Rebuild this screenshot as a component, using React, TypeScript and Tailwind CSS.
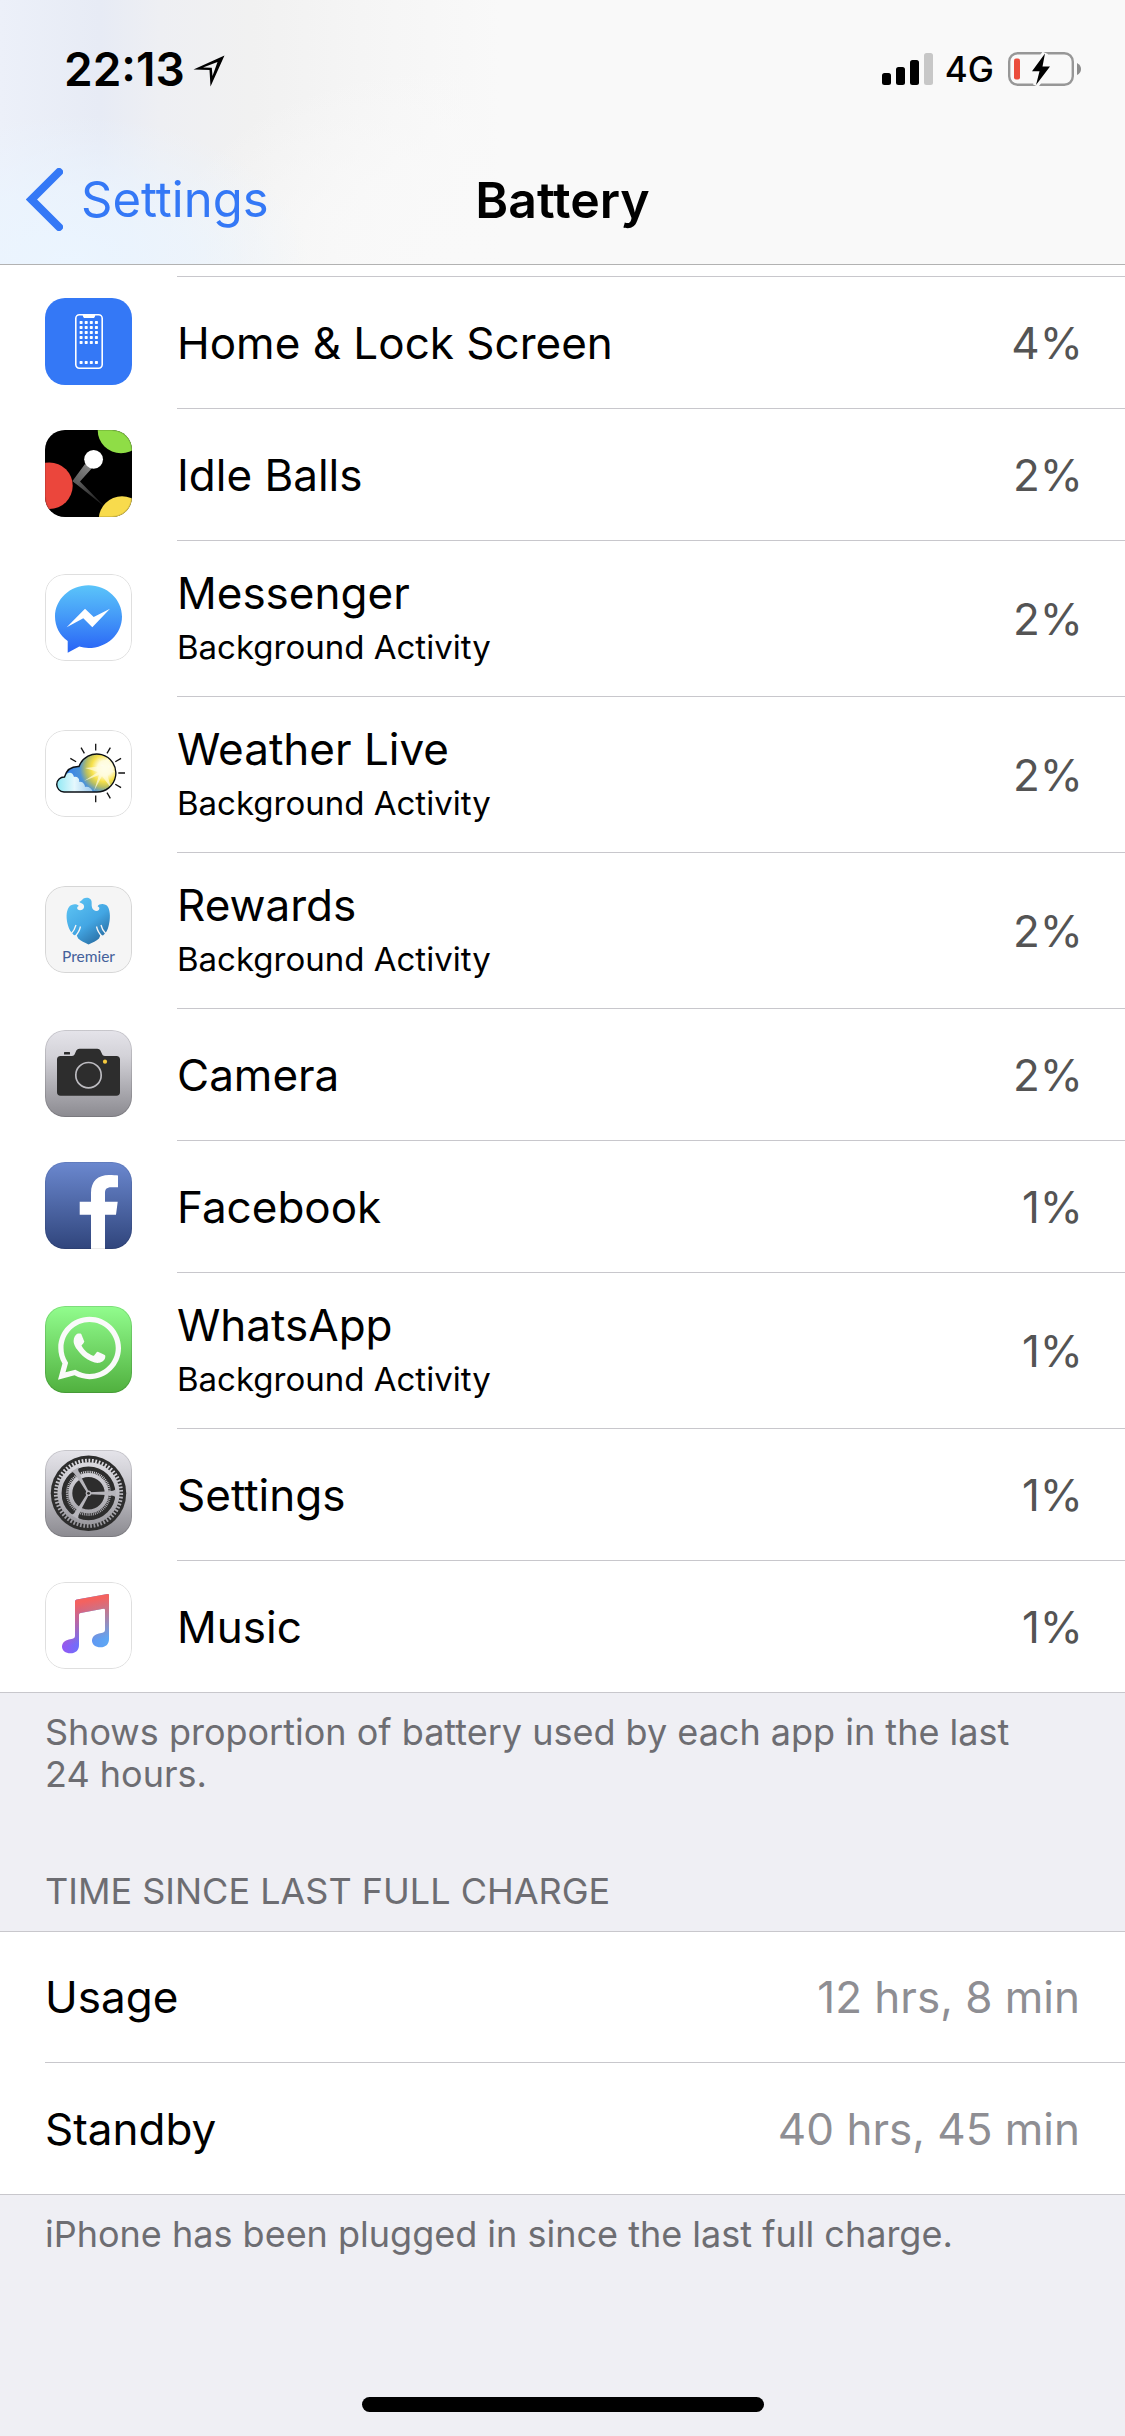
import type { ReactNode } from "react";
import { FaWhatsapp } from "react-icons/fa";

function Tile({ children, fill, edge = "#00000020" }: { children?: ReactNode; fill: string; edge?: string }) {
  return (
    <svg viewBox="0 0 87 87" className="size-[87px] overflow-hidden rounded-[20px]" aria-hidden="true">
      <rect width="87" height="87" fill={fill} />
      {children}
      <rect x="0.5" y="0.5" width="86" height="86" rx="19.5" fill="none" stroke={edge} />
    </svg>
  );
}

function HomeScreenIcon() {
  const columns = [34.6, 39.7, 44.8, 49.9];
  const rows = [23, 28, 33, 38, 43, 63];
  return (
    <Tile fill="#3478f6" edge="none">
      <rect x="30.8" y="16.8" width="26.4" height="53.4" rx="3.6" fill="none" stroke="#fff" strokeWidth="1.6" />
      <path d="M36 16.5h16c-1.6 0-1.8.8-2 1.7-.2 1.2-.8 1.8-2 1.8h-8c-1.2 0-1.8-.6-2-1.8-.2-.9-.4-1.7-2-1.7z" fill="#fff" />
      {rows.map((y) => columns.map((x) => <rect key={`${x}-${y}`} x={x} y={y} width="3" height="3" rx="0.7" fill="#fff" />))}
    </Tile>
  );
}

function IdleBallsIcon() {
  return (
    <Tile fill="#000">
      <defs>
        <linearGradient id="trailUp" x1="46" y1="34" x2="30" y2="52" gradientUnits="userSpaceOnUse">
          <stop stopColor="#8a8a8a" />
          <stop offset="1" stopColor="#5c5c5c" />
        </linearGradient>
        <linearGradient id="trailDown" x1="30" y1="50" x2="60" y2="76" gradientUnits="userSpaceOnUse">
          <stop stopColor="#636363" />
          <stop offset="1" stopColor="#111" />
        </linearGradient>
      </defs>
      <path d="M28 51.5 L60 77 L35 51.5 L32 48z" fill="url(#trailDown)" />
      <path d="M40 34 L27.5 51 L33 55 L35 51.5 L48 37z" fill="url(#trailUp)" />
      <circle cx="48.6" cy="29.3" r="9.4" fill="#fff" />
      <circle cx="76" cy="0" r="23.3" fill="#8fdd46" />
      <circle cx="4.4" cy="55.7" r="23.3" fill="#eb463c" />
      <circle cx="77" cy="89.5" r="23.2" fill="#f8db4c" />
    </Tile>
  );
}

function MessengerIcon() {
  return (
    <Tile fill="#fff">
      <defs>
        <linearGradient id="bubble" x1="0" y1="11" x2="0" y2="75" gradientUnits="userSpaceOnUse">
          <stop stopColor="#5bc5fa" />
          <stop offset="0.5" stopColor="#4499f8" />
          <stop offset="1" stopColor="#2b68f6" />
        </linearGradient>
      </defs>
      <path
        d="M43.5 11.3C25 11.3 10 25.3 10 42.7c0 9.8 4.8 18.5 12.7 24.3v11.7l11.6-6.1c2.9.9 6 1.4 9.2 1.4 18.5 0 33.5-14 33.5-31.3S62 11.3 43.5 11.3z"
        fill="url(#bubble)"
      />
      <path d="M21.7 53.3L40 34.7l8.7 8.3L65 34.7 47.3 53.3l-9-9z" fill="#fff" />
    </Tile>
  );
}

function WeatherIcon() {
  const rays = [-150, -120, -90, -60, -30, 0, 30, 60, 90];
  const outline = "M19 62A7.5 7.5 0 0 1 19.5 47C21.5 40 27 36.2 34 36.5A19 19 0 1 1 50.7 62z";
  return (
    <Tile fill="#fff">
      <defs>
        <clipPath id="skyClip">
          <path d={outline} />
        </clipPath>
        <radialGradient id="sunlight" cx="60" cy="38" r="34" gradientUnits="userSpaceOnUse">
          <stop stopColor="#fff" />
          <stop offset="0.22" stopColor="#fffbd8" />
          <stop offset="0.4" stopColor="#f7e14a" />
          <stop offset="0.56" stopColor="#b9bf62" />
          <stop offset="0.75" stopColor="#4b93d8" />
          <stop offset="1" stopColor="#3c87e4" />
        </radialGradient>
        <linearGradient id="mist" x1="11" y1="0" x2="48" y2="0" gradientUnits="userSpaceOnUse">
          <stop stopColor="#8de8f4" />
          <stop offset="0.5" stopColor="#e5f8fd" />
          <stop offset="1" stopColor="#9cc9ee" />
        </linearGradient>
      </defs>
      <g clipPath="url(#skyClip)">
        <rect x="8" y="20" width="64" height="46" fill="url(#sunlight)" />
        <path d="M59 36L40 38l13 4-14 9 15-6-5 16 8-15 9 12-4-15 8-1-7-5 2-12-8 9-6-8z" fill="#fffce0" opacity="0.7" />
        <path d="M8 64V48c4-3 9-4 12-2 3-5 8-4 9 1 4-1 6 3 5 5 4-1 6 3 6 5 4-1 8 2 8 7z" fill="url(#mist)" />
      </g>
      <path d={outline} fill="none" stroke="#0b0f14" strokeWidth="1.4" />
      {rays.map((angle) => (
        <path key={angle} d="M73.3 43H80" stroke="#111" strokeWidth="1.3" transform={`rotate(${angle} 50.7 43)`} />
      ))}
    </Tile>
  );
}

function RewardsIcon() {
  return (
    <Tile fill="#f5f5f5">
      <defs>
        <linearGradient id="eagle" x1="27" y1="14" x2="58" y2="56" gradientUnits="userSpaceOnUse">
          <stop stopColor="#5cc3f3" />
          <stop offset="0.55" stopColor="#43a6e3" />
          <stop offset="1" stopColor="#276a9f" />
        </linearGradient>
      </defs>
      <path
        d="M34.3 16C36 15.5 37 13.6 38.5 12.6C40.5 11.2 44.500 11.4 46 13.800C47.300 16 46.200 18.800 47 21.500C48 24.600 51.800 26 53.800 24C55 22.600 54.300 20.900 52.600 20.300C54 17.500 60.500 17 63 21C65.400 25.500 65.500 33 63.600 40C62.800 44 61 47 58 49.500L55.500 49L54 52.500C51 55 48 56.500 43.500 58.500C39.500 56.500 36 55 33.200 52.500L31.500 49L29 49.300C26 46.500 24 43.300 23 39.500C21.200 33 20.800 25.500 24 21C26.300 17.600 32.500 17.500 33.800 20C32.300 20.600 31.700 22 32.600 23.200C34 25 37.600 24.400 38.700 22.300C39.600 20.500 39 18.400 37.400 17.700C36.300 17.200 35.200 17 34.300 16z"
        fill="url(#eagle)"
      />
      <path d="M35.500 40.500c-1 4.500-3 7.500-6 10.500M31 39c-1 3.500-2.500 6.500-5 9M51.500 40.500c1 4.500 3 7.500 6 10.500M56 39c.7 3.500 2.500 6.500 5 9" fill="none" stroke="#f5f5f5" strokeWidth="1.3" />
      <text x="43.5" y="76" textAnchor="middle" fontFamily="Lato, sans-serif" fontSize="15.5" fill="#44609a">
        Premier
      </text>
    </Tile>
  );
}

function CameraIcon() {
  return (
    <Tile fill="url(#silver)">
      <defs>
        <linearGradient id="silver" x1="0" y1="0" x2="0" y2="87" gradientUnits="userSpaceOnUse">
          <stop stopColor="#e5e4ea" />
          <stop offset="0.3" stopColor="#d3d2d8" />
          <stop offset="1" stopColor="#8b8a90" />
        </linearGradient>
      </defs>
      <path
        d="M15.5 26h11.300c2 0 2.700-1 3.400-2.900l.7-1.700c.7-1.900 1.700-2.700 3.700-2.700h17.600c2 0 3 .8 3.700 2.700l.7 1.700c.7 1.900 1.500 2.900 3.400 2.900h11.500c2.200 0 3.500 1.300 3.500 3.500v32.700c0 2.200-1.300 3.500-3.500 3.500h-56c-2.200 0-3.500-1.300-3.500-3.500V29.500c0-2.200 1.300-3.500 3.500-3.500z"
        fill="#2d2d2d"
      />
      <rect x="19" y="22" width="6" height="2.500" rx="0.6" fill="#2d2d2d" />
      <circle cx="43.5" cy="45.2" r="12.7" fill="none" stroke="#bcbbc0" strokeWidth="1.7" />
      <circle cx="60" cy="31.7" r="2.100" fill="#f5c93e" />
    </Tile>
  );
}

function FacebookIcon() {
  return (
    <Tile fill="url(#fbBlue)" edge="#00000014">
      <defs>
        <linearGradient id="fbBlue" x1="0" y1="0" x2="0" y2="87" gradientUnits="userSpaceOnUse">
          <stop stopColor="#6b88cf" />
          <stop offset="1" stopColor="#30457c" />
        </linearGradient>
      </defs>
      <path
        d="M46 87V52.700H34.700v-13H46V31c0-12 7-18 18-18 4 0 7 .2 9 .5v11.800h-6.500c-5.400 0-6.500 2.200-6.500 6v8.400h12.700l-1.700 13H60V87z"
        fill="#fff"
      />
    </Tile>
  );
}

function WhatsAppIcon() {
  return (
    <Tile fill="url(#waGreen)">
      <defs>
        <linearGradient id="waGreen" x1="0" y1="0" x2="0" y2="87" gradientUnits="userSpaceOnUse">
          <stop stopColor="#92fd8e" />
          <stop offset="1" stopColor="#50b03e" />
        </linearGradient>
      </defs>
      <FaWhatsapp x="8.5" y="6.2" size={72} color="#fafafa" />
    </Tile>
  );
}

function SettingsIcon() {
  return (
    <Tile fill="url(#steel)">
      <defs>
        <linearGradient id="steel" x1="0" y1="0" x2="0" y2="87" gradientUnits="userSpaceOnUse">
          <stop stopColor="#e5e4ea" />
          <stop offset="0.3" stopColor="#d0cfd5" />
          <stop offset="1" stopColor="#8b8a90" />
        </linearGradient>
      </defs>
      <g fill="none" stroke="url(#steel)">
        <circle cx="43.5" cy="43.3" r="37.7" fill="#2d2d2d" stroke="none" />
        <circle cx="43.5" cy="43.3" r="32.6" strokeWidth="4" pathLength="120" strokeDasharray="1 1" />
        <circle cx="43.5" cy="43.3" r="29" strokeWidth="4.2" />
        <circle cx="43.5" cy="43.3" r="21.3" strokeWidth="2.6" pathLength="144" strokeDasharray="1 1" />
        <circle cx="43.5" cy="43.3" r="18.2" strokeWidth="4" />
        {[0, 120, 240].map((angle) => (
          <path
            key={angle}
            d="M44 42.3L61 41.5L68 40.8Q70 40.5 71 38V48.6Q70 46 68 45.800L61 45.100L44 44.300z"
            fill="#b6b5bb"
            stroke="none"
            transform={`rotate(${angle} 43.5 43.3)`}
          />
        ))}
        <circle cx="43.5" cy="43.3" r="2.8" fill="#b6b5bb" stroke="none" />
        <circle cx="43.5" cy="43.3" r="1.4" fill="#2d2d2d" stroke="none" />
      </g>
    </Tile>
  );
}

function MusicIcon() {
  const note =
    "M32 17.6L62.3 12.1C63.4 11.9 64 12.4 64 13.5V57C64 62.5 60.5 65.3 55.5 65.3C50.5 65.3 47 62.6 47 58.8C47 54.8 49.8 52.3 54 51.4L57.6 50.7C59.3 50.3 60 49.5 60 47.8V28C60 26.9 59.4 26.5 58.3 26.7L35.6 31C34.5 31.2 34 31.8 34 32.9V63C34 68.5 30.5 71.3 25.5 71.3C20.5 71.3 17 68.6 17 64.8C17 60.8 19.8 58.3 24 57.4L27.6 56.7C29.3 56.3 30 55.5 30 53.8V20C30 18.6 30.6 17.9 32 17.6z";
  return (
    <Tile fill="#fff">
      <defs>
        <linearGradient id="noteBase" x1="20" y1="0" x2="62" y2="0" gradientUnits="userSpaceOnUse">
          <stop stopColor="#8f5bf5" />
          <stop offset="0.35" stopColor="#6b72fb" />
          <stop offset="0.7" stopColor="#5f9bf3" />
          <stop offset="1" stopColor="#5fa6f3" />
        </linearGradient>
        <linearGradient id="noteTop" x1="36" y1="20" x2="44" y2="60" gradientUnits="userSpaceOnUse">
          <stop stopColor="#f4625f" />
          <stop offset="1" stopColor="#f4625f" stopOpacity="0" />
        </linearGradient>
      </defs>
      <path d={note} fill="url(#noteBase)" />
      <path d={note} fill="url(#noteTop)" />
    </Tile>
  );
}

const apps: { name: string; share: string; background?: boolean; icon: ReactNode }[] = [
  { name: "Home & Lock Screen", share: "4%", icon: <HomeScreenIcon /> },
  { name: "Idle Balls", share: "2%", icon: <IdleBallsIcon /> },
  { name: "Messenger", share: "2%", background: true, icon: <MessengerIcon /> },
  { name: "Weather Live", share: "2%", background: true, icon: <WeatherIcon /> },
  { name: "Rewards", share: "2%", background: true, icon: <RewardsIcon /> },
  { name: "Camera", share: "2%", icon: <CameraIcon /> },
  { name: "Facebook", share: "1%", icon: <FacebookIcon /> },
  { name: "WhatsApp", share: "1%", background: true, icon: <WhatsAppIcon /> },
  { name: "Settings", share: "1%", icon: <SettingsIcon /> },
  { name: "Music", share: "1%", icon: <MusicIcon /> },
];

const times = [
  { label: "Usage", value: "12 hrs, 8 min" },
  { label: "Standby", value: "40 hrs, 45 min" },
];

function StatusBar() {
  return (
    <div className="flex items-center justify-between pt-[39px] pr-11 pl-16">
      <div className="flex items-center gap-2">
        <span className="text-[46px] leading-[60px] font-semibold">22:13</span>
        <svg viewBox="0 0 32 32" className="mt-1 size-8" role="img" aria-label="Location in use">
          <path fillRule="evenodd" d="M31.5 0.5L17.5 31.5L16.5 15L0.5 14.500zM24.5 7L10 12.400L18.800 12.700L19.500 21z" fill="#000" />
        </svg>
      </div>
      <div className="flex items-center">
        <svg viewBox="0 0 51 32" className="h-8 w-[51px]" role="img" aria-label="Signal strength">
          <rect x="0" y="20" width="9" height="12" rx="2.5" />
          <rect x="14" y="14" width="9" height="18" rx="2.5" />
          <rect x="28" y="7" width="9" height="25" rx="2.5" />
          <rect x="42" y="0" width="9" height="32" rx="2.5" fill="#c7c7c7" />
        </svg>
        <span className="ml-3 text-[35px] leading-[60px] font-medium">4G</span>
        <svg viewBox="0 0 73 34" className="ml-3.5 h-[34px] w-[73px]" role="img" aria-label="Battery low, charging">
          <rect x="1.2" y="1.2" width="63.6" height="31.6" rx="8.5" fill="none" stroke="#979797" strokeWidth="2.4" />
          <path d="M69 11q4 2 4 6t-4 6z" fill="#8c8c8c" />
          <rect x="6" y="6.5" width="6" height="21" rx="2" fill="#eb4d3d" />
          <path d="M37 1.5L24 19.3H30.5L28 33L42 14.5H34.500z" stroke="#f9f9f9" strokeWidth="6" fill="#f9f9f9" />
          <path d="M37 1.5L24 19.3H31.5L28 33L42 14.5H34.500z" fill="#000" />
        </svg>
      </div>
    </div>
  );
}

export default function App() {
  return (
    <div className="flex min-h-screen flex-col bg-[#efeff4] font-[Inter,sans-serif] text-[44px] text-black">
      <header className="border-b border-[#b2b2b2] bg-[#f9f9f9] bg-[radial-gradient(ellipse_240px_150px_at_70px_264px,#ebf5ff_0%,#ebf5ffb0_50%,transparent_100%),radial-gradient(ellipse_300px_200px_at_460px_264px,#f9f9f9_0%,#f9f9f9c0_50%,transparent_100%),linear-gradient(to_right,#ecf0f9_0px,#e7ebf5_100px,#eeeff3_160px,#f1f1f1_250px,#f5f5f5_360px,#f9f9f9_500px)]">
        <StatusBar />
        <nav className="grid h-[165px] grid-cols-[1fr_auto_1fr] items-center px-[26px] pt-9">
          <button type="button" className="flex items-center gap-[18px] justify-self-start text-[49px] leading-[60px] text-[#3478f6]">
            <svg viewBox="0 0 37 63" className="h-[63px] w-[37px]" aria-hidden="true">
              <path d="M33 4L5.5 31.5L33 59" fill="none" stroke="#3478f6" strokeWidth="8" strokeLinecap="round" strokeLinejoin="miter" />
            </svg>
            Settings
          </button>
          <h1 className="text-[50px] leading-[60px] font-semibold">Battery</h1>
        </nav>
      </header>

      <main>
        <section aria-label="Battery usage by app">
          <div className="flex h-3 bg-white pl-[177px]">
            <div className="flex-1 border-b border-[#c8c7cc]" />
          </div>
          <ul>
            {apps.map((app) => (
              <li key={app.name} className="group flex gap-[45px] border-[#c8c7cc] bg-white pl-[45px] last:border-b">
                <div className="mb-[3px] shrink-0 self-center">{app.icon}</div>
                <div
                  className={`flex flex-1 items-center justify-between border-[#c8c7cc] pr-[42px] group-not-last:border-b ${
                    app.background ? "min-h-[156px]" : "min-h-[132px] group-last:min-h-[131px]"
                  }`}
                >
                  <div>
                    <p className="leading-[56px]">{app.name}</p>
                    {app.background && <p className="text-[33px] leading-[52px]">Background Activity</p>}
                  </div>
                  <span className="leading-[56px] text-[#545454]">{app.share}</span>
                </div>
              </li>
            ))}
          </ul>
          <p className="px-[45px] pt-[18px] text-[36px] leading-[42px] text-[#6d6d72]">
            Shows proportion of battery used by each app in the last 24{"\u00a0"}hours.
          </p>
        </section>

        <section className="pt-[75px]">
          <h2 className="px-[45px] pb-[19px] text-[36px] leading-[42px] text-[#6d6d72] uppercase">Time since last full charge</h2>
          <dl className="border-y border-[#c8c7cc] bg-white pl-[45px]">
            {times.map((time) => (
              <div key={time.label} className="flex min-h-[131px] items-center justify-between border-[#c8c7cc] pr-[45px] not-last:border-b">
                <dt>{time.label}</dt>
                <dd className="text-[#8e8e93]">{time.value}</dd>
              </div>
            ))}
          </dl>
          <p className="px-[45px] pt-[18px] text-[36px] leading-[42px] text-[#6d6d72]">
            iPhone has been plugged in since the last full charge.
          </p>
        </section>
      </main>

      <div className="mt-auto flex justify-center pt-12 pb-6">
        <div className="h-[15px] w-[402px] rounded-full bg-black" />
      </div>
    </div>
  );
}
